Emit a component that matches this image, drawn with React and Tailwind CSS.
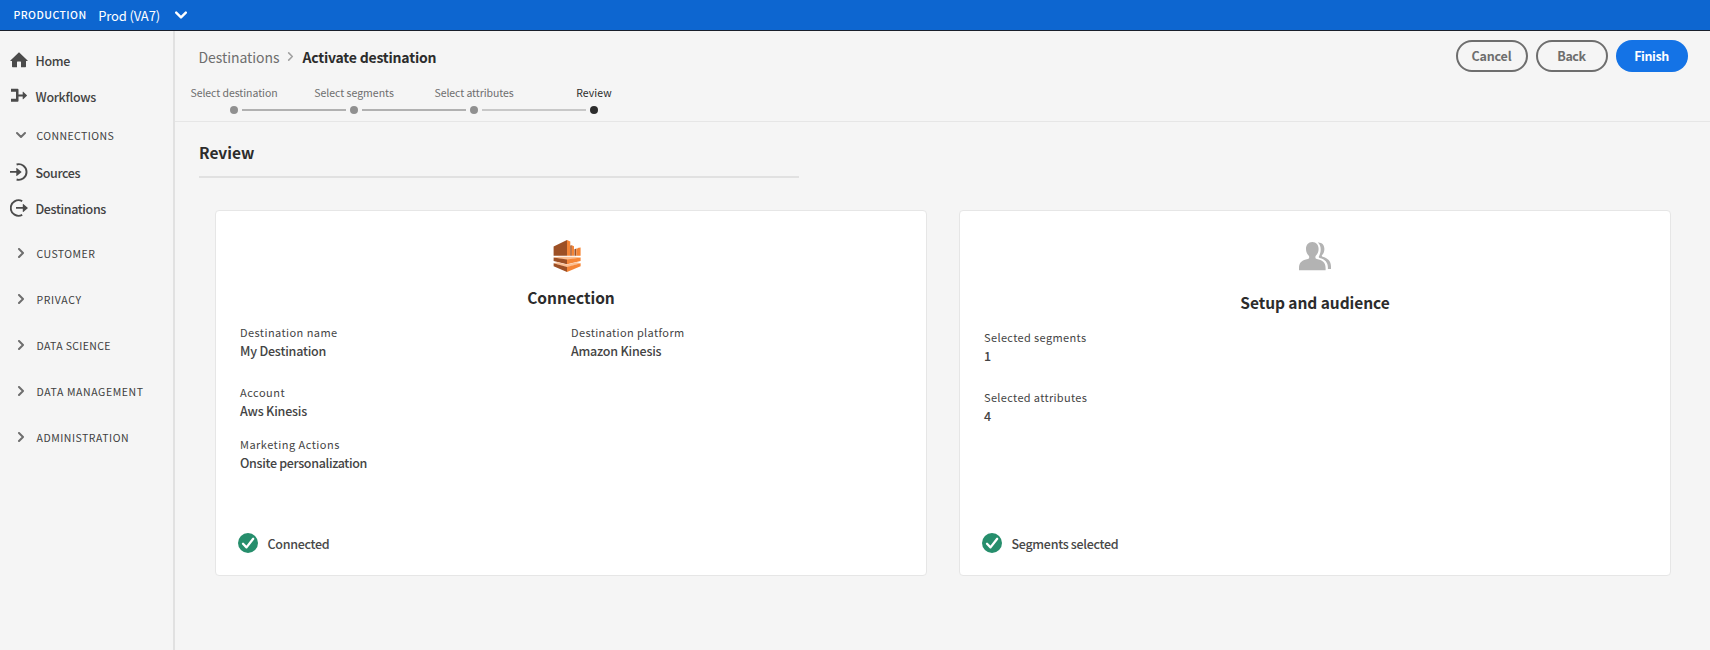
const NAV_TOP = [
  { label: "Home", icon: HomeIcon, tracking: "tracking-[-0.3px]" },
  { label: "Workflows", icon: WorkflowIcon, tracking: "tracking-[-0.3px]" },
];

const NAV_CONNECTIONS = [
  { label: "Sources", icon: SourcesIcon, tracking: "tracking-[-0.37px]" },
  { label: "Destinations", icon: DestinationsIcon, tracking: "tracking-[-0.37px]" },
];

const NAV_GROUPS = [
  { label: "CUSTOMER", tracking: "tracking-[0.45px]" },
  { label: "PRIVACY", tracking: "tracking-[0.65px]" },
  { label: "DATA SCIENCE", tracking: "tracking-[0.35px]" },
  { label: "DATA MANAGEMENT", tracking: "tracking-[0.6px]" },
  { label: "ADMINISTRATION", tracking: "tracking-[0.52px]" },
];

const STEPS = [
  { label: "Select destination", tracking: "tracking-[-0.05px]", line: "bg-[#b1b1b1]" },
  { label: "Select segments", tracking: "tracking-normal", line: "bg-[#b1b1b1]" },
  { label: "Select attributes", tracking: "tracking-[-0.07px]", line: "bg-[#c8c8c8]" },
  { label: "Review", tracking: "tracking-[0.1px]", current: true },
];

function HomeIcon() {
  return (
    <svg width="18" height="18" viewBox="0 0 18 18" fill="#4b4b4b">
      <path d="M9 1.3 17.6 9.4a.4.4 0 0 1-.3.7H16v5.4a.7.7 0 0 1-.7.7H11v-5.2a.5.5 0 0 0-.5-.5h-3a.5.5 0 0 0-.5.5v5.2H2.7a.7.7 0 0 1-.7-.7v-5.4H.7a.4.4 0 0 1-.3-.7z" />
    </svg>
  );
}

function WorkflowIcon() {
  return (
    <svg width="18" height="18" viewBox="0 0 18 18" fill="#4b4b4b">
      <path d="M1 1.8h6.6a.9.9 0 0 1 .9.9v4.7h4.2V4.9a.3.3 0 0 1 .5-.2l3.7 3.5a.3.3 0 0 1 0 .5l-3.7 3.5a.3.3 0 0 1-.5-.2V9.5H8.5v4.3a.9.9 0 0 1-.9.9H1v-2.9h5V4.7H1z" />
    </svg>
  );
}

function SourcesIcon() {
  return (
    <svg width="18" height="18" viewBox="0 0 18 18">
      <path d="M6.6 1.5a7.8 7.8 0 1 1 0 15" fill="none" stroke="#4b4b4b" strokeWidth="1.9" />
      <path d="M0 8h6.3V5.200a.3.3 0 0 1 .5-.2l4.600 3.700a.3.3 0 0 1 0 .5l-4.600 3.700a.3.3 0 0 1-.5-.2V9.800H0z" fill="#4b4b4b" />
    </svg>
  );
}

function DestinationsIcon() {
  return (
    <svg width="18" height="18" viewBox="0 0 18 18">
      <path d="M12.2 2.1A7.8 7.8 0 1 0 12.2 15.9" fill="none" stroke="#4b4b4b" strokeWidth="1.9" />
      <path d="M6 8h6.800V5.200a.3.3 0 0 1 .5-.2l4.400 3.700a.3.3 0 0 1 0 .5l-4.400 3.700a.3.3 0 0 1-.5-.2V9.800H6z" fill="#4b4b4b" />
    </svg>
  );
}

function Chevron({ direction, color = "#6e6e6e", size = 10, stroke = 2 }) {
  const d = direction === "down" ? "M1 3 5 7 9 3" : "M3 1 7 5 3 9";
  return (
    <svg width={size} height={size} viewBox="0 0 10 10" fill="none" stroke={color} strokeWidth={stroke} strokeLinecap="round" strokeLinejoin="round">
      <path d={d} />
    </svg>
  );
}

function KinesisIcon() {
  return (
    <svg width="28" height="33" viewBox="0 0 28 33">
      <path d="M.6 7.4 14 1v15.8H.6z" fill="#9d5025" />
      <path d="M14 1l3.3 1.6v14.2H14z" fill="#f58536" />
      <path d="M17.3 6.6l1.5-.4v10.6h-1.5z" fill="#9d5025" />
      <path d="M18.8 6.2l2.2 1v9.6h-2.2z" fill="#f58536" />
      <path d="M21.4 10.2l2-.6v7.2h-2z" fill="#9d5025" />
      <path d="M23.4 9.6l1 .4V9l3.200-.6v8.400h-4.200z" fill="#f58536" />
      <path d="M.6 18.600 6 17.700h16l5.600.9L14 21z" fill="#fcbf92" />
      <path d="M.6 18.4 14 20.6v4.600L.6 22z" fill="#9d5025" />
      <path d="M27.6 18.400 14 20.600v4.600l13.600-3.200z" fill="#f58536" />
      <path d="M.6 24.200 4.500 23.200l9.500 2.200 9.500-2.200 4.100 1L14 28.600z" fill="#fcbf92" />
      <path d="M.6 24.200 14 28v4.900L.6 27.300z" fill="#9d5025" />
      <path d="M27.6 24.200 14 28v4.900l13.600-5.600z" fill="#f58536" />
    </svg>
  );
}

function UsersIcon() {
  return (
    <svg width="32" height="29" viewBox="0 0 32 29" fill="#b3b3b3">
      <path d="M13.3 0c4 0 6.3 3 6.3 6.9 0 2.8-1.1 5.1-2.6 6.7-.5.6-.6 1-.6 1.7 0 1 .5 1.6 1.4 1.8 5.3 1 8.8 3.2 8.8 9v2.200H0v-2.200c0-5.800 3.500-8 8.800-9 .9-.2 1.4-.8 1.4-1.8 0-.7-.1-1.1-.6-1.7C8.100 12 7 9.700 7 6.900 7 3 9.300 0 13.300 0z" />
      <path d="M18.800.4C23 .1 25.400 3 25.400 6.900c0 2.600-.9 4.600-2.300 6.200-.5.6-.3 1.500.5 1.700 4.900 1.200 8.400 4.300 8.400 9.600v2.500h-3.100v-1.400c0-5-2.900-8.200-8.300-9.500-.8-.2-1.100-.9-.7-1.600 1-1.900 1.800-4.200 1.800-7.100 0-2.800-1-5.400-2.900-6.900z" />
    </svg>
  );
}

function CheckBadge() {
  return (
    <svg width="20" height="20" viewBox="0 0 20 20">
      <circle cx="10" cy="10" r="10" fill="#268e6c" />
      <path d="M5 10.8 8.5 14.4 15.2 5.8" fill="none" stroke="#fff" strokeWidth="2.3" strokeLinecap="round" strokeLinejoin="round" />
    </svg>
  );
}

function NavItem({ item }) {
  const Icon = item.icon;
  return (
    <a className="flex h-9 items-center gap-[7.5px] pl-[10px] text-[12.5px] font-medium text-[#424242]">
      <span className="-mt-[2px]">
        <Icon />
      </span>
      <span className={item.tracking}>{item.label}</span>
    </a>
  );
}

function NavGroup({ label, tracking, open, height }) {
  return (
    <div className={`flex items-center gap-[10.5px] pl-4 text-[10.5px] text-[#404040] ${height}`}>
      <Chevron direction={open ? "down" : "right"} />
      <span className={`mt-[2px] whitespace-nowrap ${tracking}`}>{label}</span>
    </div>
  );
}

function Field({ label, value, labelTracking, valueTracking = "" }) {
  return (
    <div className="flex w-[331px] flex-col text-[#444444]">
      <span className={`h-[18px] text-[11px] leading-[18px] ${labelTracking}`}>{label}</span>
      <span className={`h-5 text-[12.5px] leading-5 font-medium ${valueTracking}`}>{value}</span>
    </div>
  );
}

function Card({ icon, title, titleClass, status, statusTracking, children }) {
  return (
    <section className="flex h-[366px] w-[712px] flex-col rounded border border-[#e6e6e6] bg-white px-6 pb-[22px]">
      <div className="flex justify-center">{icon}</div>
      <h2 className={`h-6 text-center text-[15.5px] leading-6 font-bold text-[#2c2c2c] ${titleClass}`}>{title}</h2>
      <div className="mt-[14px] flex flex-col">{children}</div>
      <div className="mt-auto -ml-[2px] flex h-5 items-center gap-[9.5px]">
        <CheckBadge />
        <span className={`mt-[2px] text-[12.5px] font-medium text-[#484848] ${statusTracking}`}>{status}</span>
      </div>
    </section>
  );
}

export default function App() {
  return (
    <div className="flex h-[650px] flex-col bg-[#f5f5f5] font-['Noto_Sans_CJK_SC','Noto_Sans',sans-serif]">
      <div className="flex h-[31px] shrink-0 items-center border-b border-[#1a1f2b] bg-[#0d66d0] pl-[13.5px] text-white">
        <span className="text-[10.5px] leading-none font-medium tracking-[0.46px]">PRODUCTION</span>
        <span className="ml-[11.5px] text-[13px] leading-none tracking-[-0.13px]">Prod (VA7)</span>
        <span className="ml-[15px] -mt-px">
          <Chevron direction="down" color="#fff" size={12} stroke={2} />
        </span>
      </div>

      <div className="flex min-h-0 flex-1">
        <aside className="w-[175px] shrink-0 border-r-2 border-[#e1e1e1] pt-3">
          {NAV_TOP.map((item) => (
            <NavItem key={item.label} item={item} />
          ))}
          <NavGroup label="CONNECTIONS" tracking="tracking-[0.42px]" open height="h-10" />
          {NAV_CONNECTIONS.map((item) => (
            <NavItem key={item.label} item={item} />
          ))}
          <div className="mt-[3px]">
            {NAV_GROUPS.map((group) => (
              <NavGroup key={group.label} {...group} height="h-[46px]" />
            ))}
          </div>
        </aside>

        <main className="min-w-0 flex-1">
          <header className="flex h-[91px] justify-between border-b border-[#e6e6e6]">
            <div>
              <div className="ml-[23.5px] flex h-[52px] items-center text-[14px]">
                <span className="tracking-[-0.06px] text-[#6e6e6e]">Destinations</span>
                <span className="mx-[7px] -mt-[2px]">
                  <Chevron direction="right" color="#a0a0a0" size={9} stroke={1.7} />
                </span>
                <span className="font-bold tracking-[-0.2px] text-[#2c2c2c]">Activate destination</span>
              </div>
              <ol className="-ml-px flex">
                {STEPS.map((step) => (
                  <li key={step.label} className="flex w-[120px] flex-col items-center pt-px">
                    <span
                      className={`h-[18px] text-[10.5px] leading-[18px] whitespace-nowrap ${step.tracking} ${step.current ? "text-[#2c2c2c]" : "text-[#6e6e6e]"}`}
                    >
                      {step.label}
                    </span>
                    <span className="mt-1 flex h-2 w-full items-center pl-14">
                      <span className={`size-2 shrink-0 rounded-full ${step.current ? "bg-[#2c2c2c]" : "bg-[#909090]"}`} />
                      {step.line && <span className={`-mr-12 ml-1 h-0.5 w-[104px] shrink-0 ${step.line}`} />}
                    </span>
                  </li>
                ))}
              </ol>
            </div>
            <div className="mt-[9px] mr-[22px] flex h-8 gap-2 text-[12.5px] font-bold">
              <button className="w-[72px] rounded-full border-2 border-[#6e6e6e] pr-px tracking-[-0.2px] text-[#6e6e6e]">Cancel</button>
              <button className="w-[72px] rounded-full border-2 border-[#6e6e6e] pr-px tracking-[-0.4px] text-[#6e6e6e]">Back</button>
              <button className="w-[72px] rounded-full bg-[#1473e6] pr-px tracking-[-0.4px] text-white">Finish</button>
            </div>
          </header>

          <h1 className="mt-[18px] ml-6 h-[38px] w-[600px] border-b-2 border-[#e1e1e1] text-[15.5px] leading-6 font-bold text-[#2c2c2c]">
            Review
          </h1>

          <div className="mt-8 ml-10 flex gap-8">
            <Card
              icon={<span className="mt-[28px] -ml-2 h-[33px]"><KinesisIcon /></span>}
              title="Connection"
              titleClass="mt-[13px]"
              status="Connected"
              statusTracking="tracking-[-0.3px]"
            >
              <div className="flex">
                <Field label="Destination name" value="My Destination" labelTracking="tracking-[0.43px]" valueTracking="tracking-[-0.19px]" />
                <Field label="Destination platform" value="Amazon Kinesis" labelTracking="tracking-[0.37px]" valueTracking="tracking-[-0.22px]" />
              </div>
              <div className="mt-[22px]">
                <Field label="Account" value="Aws Kinesis" labelTracking="tracking-[0.5px]" valueTracking="tracking-[-0.2px]" />
              </div>
              <div className="mt-[14px]">
                <Field label="Marketing Actions" value="Onsite personalization" labelTracking="tracking-[0.48px]" valueTracking="tracking-[-0.33px]" />
              </div>
            </Card>
            <Card
              icon={<span className="mt-[31px] h-[28px]"><UsersIcon /></span>}
              title="Setup and audience"
              titleClass="mt-[20px] tracking-[-0.05px]"
              status="Segments selected"
              statusTracking="tracking-[-0.3px]"
            >
              <Field label="Selected segments" value="1" labelTracking="tracking-[0.37px]" />
              <div className="mt-[22px]">
                <Field label="Selected attributes" value="4" labelTracking="tracking-[0.34px]" />
              </div>
            </Card>
          </div>
        </main>
      </div>
    </div>
  );
}
